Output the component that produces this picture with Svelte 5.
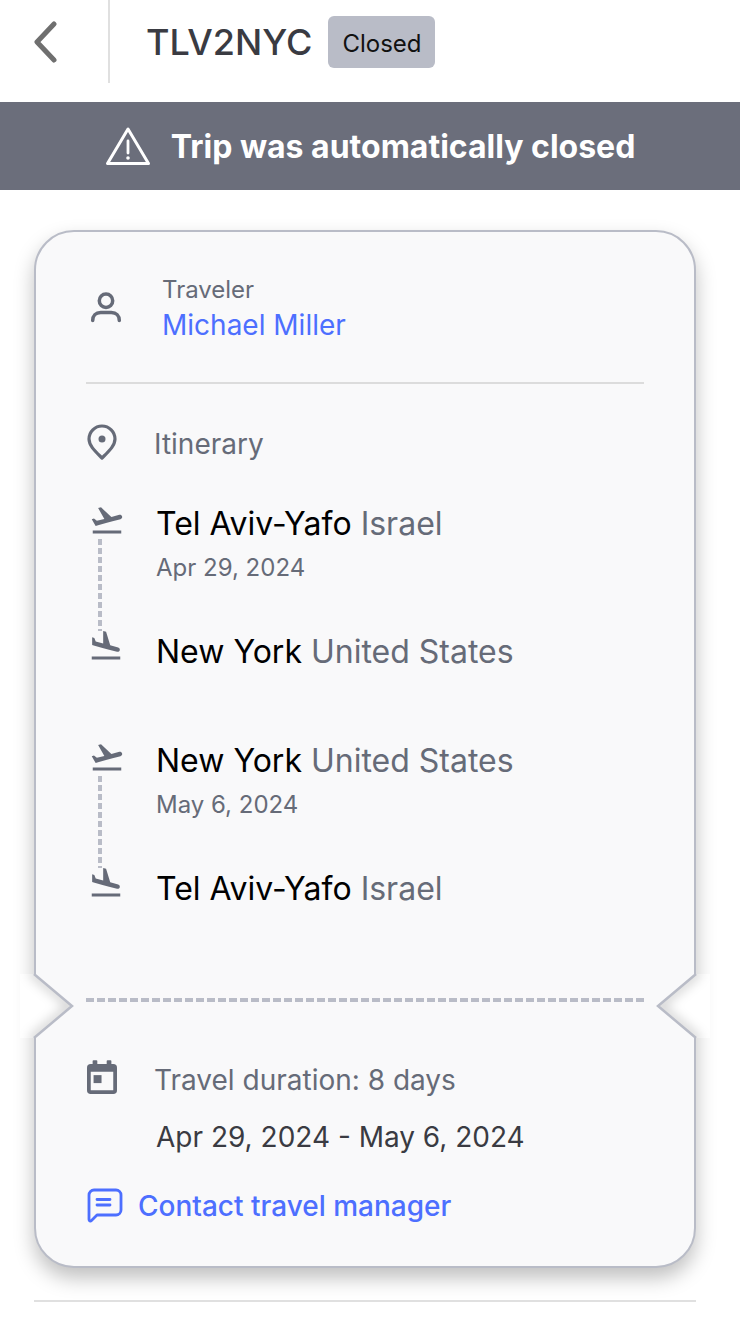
<script>
  const legs = [
    { from: 'Tel Aviv-Yafo', fromCountry: 'Israel', date: 'Apr 29, 2024', to: 'New York', toCountry: 'United States' },
    { from: 'New York', fromCountry: 'United States', date: 'May 6, 2024', to: 'Tel Aviv-Yafo', toCountry: 'Israel' }
  ];
</script>

<div class="page">
  <header class="topbar">
    <button type="button" class="back" aria-label="Back">
      <svg width="28" height="42" viewBox="0 0 28 42" fill="none">
        <path d="M22 3 5 21l17 18" stroke="#6f6f6f" stroke-width="5" stroke-linecap="round" stroke-linejoin="round" />
      </svg>
    </button>
    <div class="title">
      <h1>TLV2NYC</h1>
      <span class="badge">Closed</span>
    </div>
  </header>

  <div class="banner">
    <svg width="46" height="40" viewBox="0 0 46 40" fill="none">
      <path d="M23 3 2.500 37.500h41z" stroke="#fff" stroke-width="3" stroke-linejoin="round" />
      <path d="M23 15v12" stroke="#fff" stroke-width="2.800" stroke-linecap="round" />
      <circle cx="23" cy="32" r="1.800" fill="#fff" />
    </svg>
    <span>Trip was automatically closed</span>
  </div>

  <section class="card">
    <div class="traveler">
      <svg class="person" width="34" height="34" viewBox="0 0 34 34" fill="none">
        <circle cx="17" cy="10.700" r="6.700" stroke="#666b78" stroke-width="3.500" />
        <path d="M3.700 30.500c0-5 3-8 8-8h10.600c5 0 8 3 8 8" stroke="#666b78" stroke-width="3.500" stroke-linecap="round" />
      </svg>
      <div>
        <div class="traveler-label">Traveler</div>
        <div class="traveler-name">Michael Miller</div>
      </div>
    </div>

    <div class="rule"></div>

    <div class="section-head itinerary-head">
      <svg width="32" height="36" viewBox="0 0 32 36" fill="none">
        <path d="M16 34C10 28 3 22 3 15a13 13 0 0 1 26 0c0 7-7 13-13 19z" stroke="#666b78" stroke-width="3.200" stroke-linejoin="round" />
        <circle cx="16" cy="15" r="3.500" fill="#666b78" />
      </svg>
      <span>Itinerary</span>
    </div>

    {#each legs as leg}
      <div class="leg">
        <div class="leg-icons">
          <svg class="takeoff" width="36" height="36" viewBox="0 0 24 24" fill="#666b78">
            <path d="M2.500 19h19v2h-19zm19.570-9.360c-.21-.8-1.040-1.280-1.840-1.060L14.920 10l-6.900-6.430-1.930.51 4.140 7.170-4.970 1.330-1.970-1.540-1.450.39 1.820 3.160.77 1.330 1.600-.43 5.310-1.420 4.350-1.160L21 11.490c.81-.23 1.280-1.050 1.070-1.850z" />
          </svg>
          <span class="leg-line"></span>
          <svg class="land" width="36" height="36" viewBox="0 0 24 24" fill="#666b78">
            <path d="M2.500 19h19v2h-19zm7.180-5.730 4.350 1.160 5.310 1.420c.8.210 1.620-.26 1.840-1.060.21-.8-.26-1.620-1.060-1.840l-5.310-1.420-2.760-9.020L10.120 2v8.280L5.150 8.950l-.93-2.320-1.450-.39v5.170l1.600.43 5.310 1.430z" />
          </svg>
        </div>
        <div class="leg-stops">
          <div class="stop">{leg.from} <span>{leg.fromCountry}</span></div>
          <div class="leg-date">{leg.date}</div>
          <div class="stop stop-to">{leg.to} <span>{leg.toCountry}</span></div>
        </div>
      </div>
    {/each}

    <div class="tear">
      {#each ['left', 'right'] as side}
        <svg class="notch {side}" width="60" height="64" viewBox="0 0 60 64" fill="none">
          <defs>
            <clipPath id="notch-clip-{side}"><path d="M0 0h14l38 32-38 32H0z" /></clipPath>
            <filter id="notch-blur-{side}" x="-50%" y="-50%" width="200%" height="200%"><feGaussianBlur stdDeviation="6" /></filter>
          </defs>
          <path d="M0 0h14l38 32-38 32H0z" fill="#fff" />
          <g clip-path="url(#notch-clip-{side})">
            <path d="M14 -6v6l38 32-38 32v6" stroke="#000" stroke-opacity=".22" stroke-width="7" filter="url(#notch-blur-{side})" />
          </g>
          <path d="M14 0l38 32-38 32" stroke="#b9bcc7" stroke-width="2.500" />
        </svg>
      {/each}
    </div>

    <div class="section-head duration-head">
      <svg class="calendar" width="30" height="34" viewBox="0 0 32 36">
        <path fill="#666b78" fill-rule="evenodd" d="M6 1a1 1 0 0 1 1-1h3a1 1 0 0 1 1 1v3h10V1a1 1 0 0 1 1-1h3a1 1 0 0 1 1 1v3h2a4 4 0 0 1 4 4v24a4 4 0 0 1-4 4H4a4 4 0 0 1-4-4V8a4 4 0 0 1 4-4h2zM4 12.500V32h24V12.500z" />
        <rect x="7" y="16" width="8.500" height="8.500" fill="#666b78" />
      </svg>
      <span>Travel duration: 8 days</span>
    </div>
    <div class="dates">Apr 29, 2024 - May 6, 2024</div>
    <div class="contact">
      <svg width="36" height="36" viewBox="0 0 36 36" fill="none" stroke="#4d6fff" stroke-width="2.800">
        <path d="M2 30V7a5 5 0 0 1 5-5h22a5 5 0 0 1 5 5v15a5 5 0 0 1-5 5H10l-5.500 5.500C3.500 33.500 2 33 2 31.500z" stroke-linejoin="round" />
        <path d="M10 11.500h13M10 17h13" stroke-linecap="round" />
      </svg>
      <span>Contact travel manager</span>
    </div>
  </section>

  <div class="bottom-rule"></div>
</div>

<style>
  :global(body) {
    margin: 0;
    background: #fff;
  }

  .page {
    height: 1318px;
    overflow: hidden;
    font-family: Inter, "Liberation Sans", sans-serif;
    color: #000;
  }

  .topbar {
    display: flex;
    height: 102px;
  }

  .back {
    display: flex;
    align-items: center;
    justify-content: center;
    width: 110px;
    height: 83px;
    padding: 0 16px 0 0;
    border: none;
    border-right: 2px solid #e0e0e0;
    background: none;
    box-sizing: border-box;
  }

  .title {
    display: flex;
    align-items: flex-start;
    gap: 16px;
    padding: 16px 0 0 36px;
  }

  h1 {
    margin: 0;
    font-size: 36px;
    font-weight: 500;
    line-height: 52px;
    color: #3a3b42;
  }

  .badge {
    height: 52px;
    padding: 0 13px 0 14px;
    border-radius: 6px;
    background: #b9bcc7;
    font-size: 24px;
    line-height: 55px;
    color: #111;
  }

  .banner {
    display: flex;
    align-items: center;
    justify-content: center;
    gap: 20px;
    height: 88px;
    background: #6b6e7b;
    color: #fff;
    font-size: 32px;
    font-weight: 700;
  }

  .card {
    position: relative;
    box-sizing: border-box;
    height: 1038px;
    margin: 40px 44px 0 34px;
    padding: 0 50px;
    border: 2px solid #b9bcc7;
    border-radius: 40px;
    background: #f9f9fa;
    box-shadow: 0 10px 20px rgba(0, 0, 0, 0.25);
  }

  .traveler {
    display: flex;
    align-items: center;
    gap: 39px;
    height: 150px;
    padding: 6px 0 0 3px;
    box-sizing: border-box;
  }

  .person {
    margin-top: -6px;
  }

  .traveler-label {
    font-size: 24px;
    line-height: 30px;
    color: #666b78;
  }

  .traveler-name {
    font-size: 28px;
    line-height: 40px;
    color: #4d6fff;
  }

  .rule {
    height: 2px;
    background: #dcdcdc;
  }

  .section-head {
    display: flex;
    align-items: center;
    gap: 36px;
    font-size: 28px;
    color: #666b78;
  }

  .itinerary-head {
    margin: 40px 0 0 0;
    height: 40px;
  }

  .itinerary-head svg {
    margin-top: -4px;
  }

  .leg {
    display: flex;
    height: 237px;
  }

  .leg-icons {
    display: flex;
    flex-direction: column;
    width: 70px;
    flex: none;
    padding-top: 38px;
  }

  .takeoff {
    margin-left: 3px;
  }

  .land {
    margin: -3px 0 0 2px;
  }

  .leg-line {
    width: 4px;
    height: 92px;
    margin: 1px 0 0 12px;
    background: repeating-linear-gradient(#b9bcc7 0 6.500px, transparent 6.500px 9px);
  }

  .leg-stops {
    padding-top: 40px;
  }

  .stop {
    font-size: 32px;
    line-height: 40px;
  }

  .stop span {
    color: #666b78;
  }

  .leg-date {
    margin-top: 8px;
    font-size: 24px;
    line-height: 32px;
    color: #666b78;
  }

  .stop-to {
    margin-top: 48px;
  }

  .tear {
    position: relative;
    height: 4px;
    margin-top: 60px;
    background: repeating-linear-gradient(90deg, #b9bcc7 0 8px, transparent 8px 11px);
  }

  .notch {
    position: absolute;
    top: -24px;
  }

  .notch.left {
    left: -66px;
  }

  .notch.right {
    right: -66px;
    transform: scaleX(-1);
  }

  .duration-head {
    margin-top: 58px;
    height: 40px;
  }

  .calendar {
    margin: -6px 1px 0;
  }

  .dates {
    margin: 17px 0 0 70px;
    font-size: 28px;
    line-height: 40px;
    color: #3a3b42;
  }

  .contact {
    display: flex;
    align-items: center;
    gap: 15px;
    margin: 31px 0 0 1px;
    font-size: 28px;
    font-weight: 500;
    color: #4d6fff;
  }

  .bottom-rule {
    height: 2px;
    margin: 32px 44px 0 34px;
    background: #e0e0e0;
  }
</style>
